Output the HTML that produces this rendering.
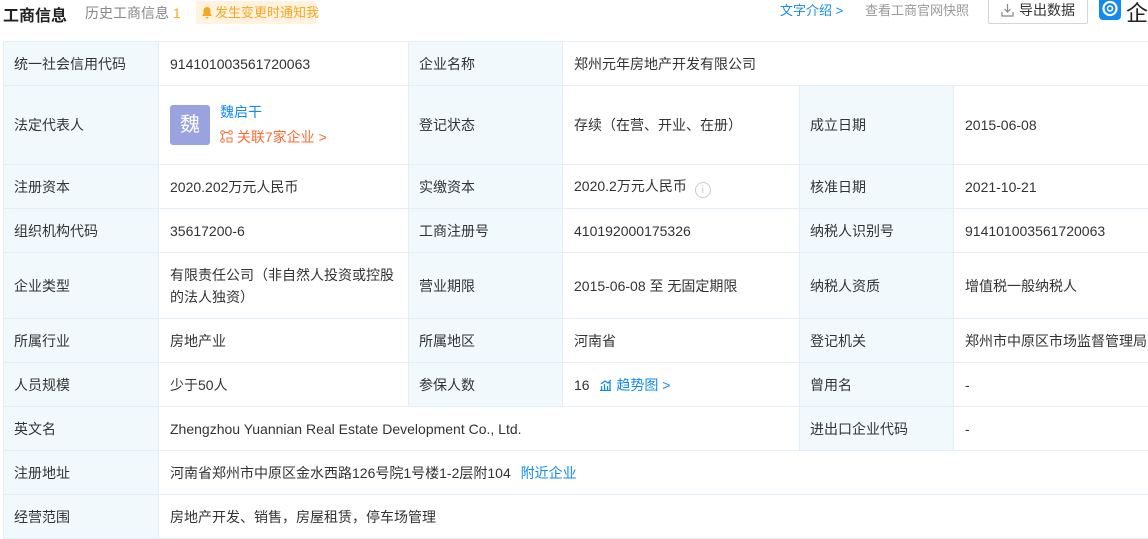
<!DOCTYPE html>
<html><head><meta charset="utf-8"><style>
body{margin:0;width:1148px;height:525px;overflow:hidden;background:#fff;font-family:"Liberation Sans","Noto Sans CJK SC",sans-serif;font-size:14px;color:#333;position:relative}
.t{position:absolute;left:3px;top:41px;border-collapse:collapse;table-layout:fixed;width:1160px}
.t td{border:1px solid #e4eef6;padding:0 10px 0 11px;vertical-align:middle;line-height:22px}
.t td.l{background:#f2f9fc;padding-left:10px}
a{color:#128bed;text-decoration:none}
.hd{position:absolute;top:0;left:0;width:1148px;height:40px}
</style></head><body>
<div class="hd">
<span style="position:absolute;left:3px;top:2px;font-size:16px;font-weight:bold;color:#222">工商信息</span>
<span style="position:absolute;left:85px;top:3px;color:#888">历史工商信息 <span style="color:#f9a825">1</span></span>
<span style="position:absolute;left:196px;top:1px;height:23px;width:120px;background:#fff3e0;border-radius:2px;color:#f5a623;font-size:13px;line-height:23px;padding-left:5px;box-sizing:border-box;white-space:nowrap"><svg width="12" height="13" viewBox="0 0 12 13" style="vertical-align:-2px;margin-right:2px"><path d="M6 1C3.5 1 2.5 3 2.5 5v3L1 10h10L9.5 8V5C9.5 3 8.5 1 6 1zM4.5 11a1.5 1.5 0 0 0 3 0z" fill="#f5a623"/></svg>发生变更时通知我</span>
<a style="position:absolute;left:780px;top:0px;font-size:13px">文字介绍 ></a>
<span style="position:absolute;left:865px;top:0px;font-size:13px;color:#999">查看工商官网快照</span>
<span style="position:absolute;left:988px;top:-4px;width:100px;height:28px;border:1px solid #d6d6d6;border-radius:2px;box-sizing:border-box;line-height:26px;font-size:14px;color:#333;padding-left:30px">导出数据<svg style="position:absolute;left:12px;top:6px" width="13" height="14" viewBox="0 0 13 14"><path d="M6.5 1v8M3.5 6l3 3 3-3M1 9v4h11V9" fill="none" stroke="#888" stroke-width="1.2"/></svg></span>
<span style="position:absolute;left:1099px;top:-3px;width:22px;height:23px;background:#128bed;border-radius:4px"><svg width="22" height="23"><circle cx="11" cy="11.5" r="6.5" fill="none" stroke="#fff" stroke-width="2.2"/><circle cx="11" cy="11.5" r="2.5" fill="none" stroke="#fff" stroke-width="1.6"/></svg></span>
<span style="position:absolute;left:1126px;top:-4px;font-size:22px;color:#222">企</span>
</div>
<table class="t">
<colgroup><col style="width:155px"><col style="width:250px"><col style="width:154px"><col style="width:237px"><col style="width:154px"><col></colgroup>
<tr style="height:44px"><td class="l">统一社会信用代码</td><td>914101003561720063</td><td class="l">企业名称</td><td colspan="3">郑州元年房地产开发有限公司</td></tr>
<tr style="height:79px"><td class="l">法定代表人</td><td><div style="position:relative;height:60px"><span style="position:absolute;left:0;top:10px;width:40px;height:40px;background:#9aa3e0;border-radius:3px;color:#fff;font-size:20px;line-height:40px;text-align:center">魏</span><a style="position:absolute;left:50px;top:6px">魏启干</a><span style="position:absolute;left:50px;top:31px;color:#fd6b32"><svg width="13" height="13" viewBox="0 0 13 13" style="vertical-align:-1px"><circle cx="2.5" cy="2.5" r="1.8" fill="none" stroke="#fd6b32"/><circle cx="10.5" cy="2.5" r="1.8" fill="none" stroke="#fd6b32"/><circle cx="2.5" cy="10.5" r="1.8" fill="none" stroke="#fd6b32"/><path d="M4.3 2.5h4.4M2.5 4.3v4.4M7 8h5v4H7z" fill="none" stroke="#fd6b32"/></svg> 关联7家企业 ></span></div></td><td class="l">登记状态</td><td>存续（在营、开业、在册）</td><td class="l">成立日期</td><td>2015-06-08</td></tr>
<tr style="height:44px"><td class="l">注册资本</td><td>2020.202万元人民币</td><td class="l">实缴资本</td><td>2020.2万元人民币 <span style="display:inline-block;width:14px;height:14px;border:1px solid #ccc;border-radius:50%;color:#ccc;font-size:11px;line-height:14px;text-align:center;vertical-align:-2px;margin-left:4px">i</span></td><td class="l">核准日期</td><td>2021-10-21</td></tr>
<tr style="height:44px"><td class="l">组织机构代码</td><td>35617200-6</td><td class="l">工商注册号</td><td>410192000175326</td><td class="l">纳税人识别号</td><td>914101003561720063</td></tr>
<tr style="height:66px"><td class="l">企业类型</td><td>有限责任公司（非自然人投资或控股的法人独资）</td><td class="l">营业期限</td><td>2015-06-08 至 无固定期限</td><td class="l">纳税人资质</td><td>增值税一般纳税人</td></tr>
<tr style="height:44px"><td class="l">所属行业</td><td>房地产业</td><td class="l">所属地区</td><td>河南省</td><td class="l">登记机关</td><td style="white-space:nowrap">郑州市中原区市场监督管理局</td></tr>
<tr style="height:44px"><td class="l">人员规模</td><td>少于50人</td><td class="l">参保人数</td><td>16 <a style="margin-left:6px"><svg width="13" height="13" viewBox="0 0 13 13" style="vertical-align:-1px"><path d="M1 12.5h11M2.5 12V8M5.5 12V6M8.5 12V8M11 12V4M2 6l4-3 3 2 3-3" fill="none" stroke="#128bed" stroke-width="1.3"/></svg> 趋势图 ></a></td><td class="l">曾用名</td><td>-</td></tr>
<tr style="height:44px"><td class="l">英文名</td><td colspan="3">Zhengzhou Yuannian Real Estate Development Co., Ltd.</td><td class="l">进出口企业代码</td><td>-</td></tr>
<tr style="height:44px"><td class="l">注册地址</td><td colspan="5">河南省郑州市中原区金水西路126号院1号楼1-2层附104 <a style="margin-left:6px">附近企业</a></td></tr>
<tr style="height:44px"><td class="l">经营范围</td><td colspan="5">房地产开发、销售，房屋租赁，停车场管理</td></tr>
</table>
</body></html>
